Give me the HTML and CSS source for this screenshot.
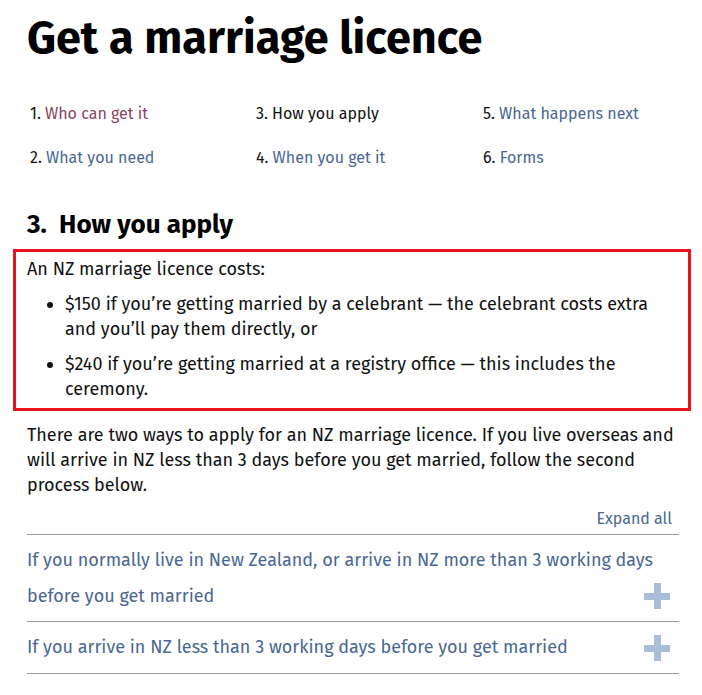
FILE: index.html
```html
<!DOCTYPE html>
<html lang="en">
<head>
<meta charset="utf-8">
<title>Get a marriage licence</title>
<link rel="stylesheet" href="styles.css">
</head>
<body>
<main class="page">
  <h1 class="title">Get a marriage licence</h1>
  <ol class="steps">
    <li class="step"><span class="num">1.</span> <a class="link visited" href="#">Who can get it</a></li>
    <li class="step"><span class="num">3.</span> <span class="current">How you apply</span></li>
    <li class="step"><span class="num">5.</span> <a class="link" href="#">What happens next</a></li>
    <li class="step"><span class="num">2.</span> <a class="link" href="#">What you need</a></li>
    <li class="step"><span class="num">4.</span> <a class="link" href="#">When you get it</a></li>
    <li class="step"><span class="num">6.</span> <a class="link" href="#">Forms</a></li>
  </ol>
  <h2 class="section-title">3.&nbsp; How you apply</h2>
  <div class="highlight">
    <p class="para">An NZ marriage licence costs:</p>
    <ul class="costs">
      <li>$150 if you’re getting married by a celebrant — the celebrant costs extra and you’ll pay them directly, or</li>
      <li>$240 if you’re getting married at a registry office — this includes the ceremony.</li>
    </ul>
  </div>
  <p class="para intro">There are two ways to apply for an NZ marriage licence. If you live overseas and will arrive in NZ less than 3 days before you get married, follow the second process below.</p>
  <div class="expand-row"><a class="link" href="#">Expand all</a></div>
  <div class="accordion">
    <div class="acc-item">
      <span class="acc-title">If you normally live in New Zealand, or arrive in NZ more than 3 working days before you get married</span>
      <span class="plus" aria-hidden="true"></span>
    </div>
    <div class="acc-item">
      <span class="acc-title">If you arrive in NZ less than 3 working days before you get married</span>
      <span class="plus" aria-hidden="true"></span>
    </div>
  </div>
</main>
</body>
</html>
```
FILE: styles.css
```css
* { box-sizing: border-box; }
html, body { margin: 0; padding: 0; background: #fff; }
body {
  font-family: "Fira Sans", Roboto, "Liberation Sans", sans-serif;
  color: #111;
  font-size: 18px;
  line-height: 25px;
}
.page {
  width: 679px;
  padding-left: 27px;
  padding-top: 10px;
}
.title {
  margin: 0;
  font-size: 45px;
  line-height: 56px;
  font-weight: 700;
  color: #000;
}
.steps {
  list-style: none;
  margin: 35px 0 0 3px;
  padding: 0;
  display: grid;
  grid-template-columns: 226px 227px 1fr;
  row-gap: 19px;
  font-size: 16px;
  line-height: 25px;
}
.num { color: #111; }
.link { color: #4a6791; text-decoration: none; }
.link.visited { color: #874564; }
.current { color: #111; }
.section-title {
  margin: 39px 0 0;
  font-size: 26px;
  line-height: 32px;
  font-weight: 700;
  color: #000;
}
.highlight {
  margin: 8px 0 0 -14px;
  width: 678px;
  border: 3px solid #e8131b;
  padding: 5px 11px 6px;
}
.para { margin: 0; }
.costs {
  margin: 10px 0 0;
  padding-left: 38px;
}
.costs li { margin-bottom: 10px; }
.costs li:last-child { margin-bottom: 0; }
.intro { margin-top: 12px; }
.expand-row {
  margin-top: 8px;
  text-align: right;
  font-size: 16px;
  line-height: 25px;
  padding-right: 7px;
  padding-bottom: 3px;
  border-bottom: 1px solid #999;
}
.acc-item {
  position: relative;
  border-bottom: 1px solid #999;
  padding: 7px 16px 7px 0;
}
.acc-item:last-child { padding-bottom: 8px; }
.acc-title {
  display: block;
  color: #4a6791;
  line-height: 36px;
  font-size: 18px;
}
.plus {
  position: absolute;
  right: 9px;
  bottom: 12px;
  width: 26px;
  height: 26px;
}
.plus::before, .plus::after {
  content: "";
  position: absolute;
  background: #a9bdd8;
}
.plus::before { left: 0; right: 0; top: 9.5px; height: 7px; }
.plus::after { top: 0; bottom: 0; left: 9.5px; width: 7px; }
```
